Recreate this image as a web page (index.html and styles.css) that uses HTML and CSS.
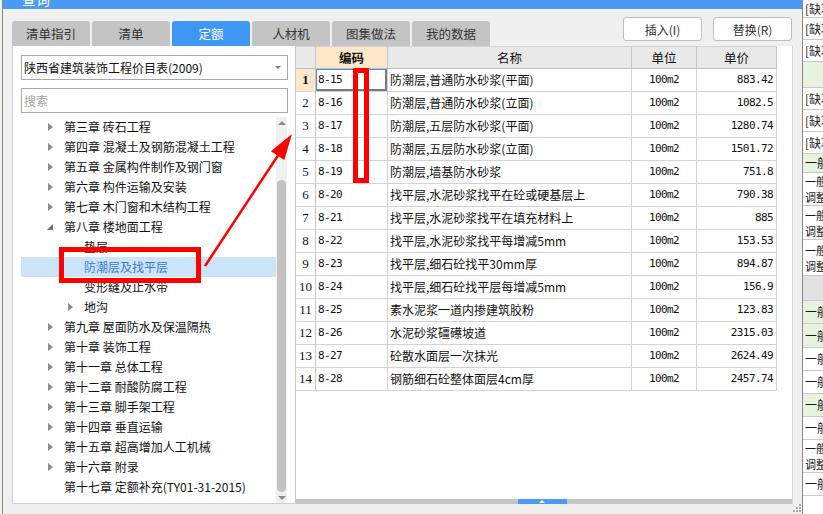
FILE: index.html
```html
<!DOCTYPE html>
<html lang="zh-CN">
<head>
<meta charset="utf-8">
<title>定额查询</title>
<link rel="stylesheet" href="styles.css">
</head>
<body>
<div class="screen">
  <div class="bg-left"></div>
  <div class="dialog">
    <div class="titlebar"><span class="title">查询</span></div>
    <div class="topbar">
      <div class="tabs">
        <div class="tab">清单指引</div>
        <div class="tab">清单</div>
        <div class="tab active">定额</div>
        <div class="tab">人材机</div>
        <div class="tab">图集做法</div>
        <div class="tab">我的数据</div>
      </div>
      <div class="buttons">
        <button class="btn">插入(I)</button>
        <button class="btn">替换(R)</button>
      </div>
    </div>
    <div class="content">
      <div class="left-pane">
        <div class="select">陕西省建筑装饰工程价目表(2009)<span class="caret"></span></div>
        <div class="search">搜索</div>
        <div class="tree">
          <div class="tree-list">
            <div class="node"><span class="tw"><i class="closed"></i></span>第三章 砖石工程</div>
            <div class="node"><span class="tw"><i class="closed"></i></span>第四章 混凝土及钢筋混凝土工程</div>
            <div class="node"><span class="tw"><i class="closed"></i></span>第五章 金属构件制作及钢门窗</div>
            <div class="node"><span class="tw"><i class="closed"></i></span>第六章 构件运输及安装</div>
            <div class="node"><span class="tw"><i class="closed"></i></span>第七章 木门窗和木结构工程</div>
            <div class="node"><span class="tw"><i class="open"></i></span>第八章 楼地面工程</div>
            <div class="node sub"><span class="tw"></span>垫层</div>
            <div class="node sub selected"><span class="tw"></span>防潮层及找平层</div>
            <div class="node sub"><span class="tw"></span>变形缝及止水带</div>
            <div class="node sub"><span class="tw"><i class="closed"></i></span>地沟</div>
            <div class="node"><span class="tw"><i class="closed"></i></span>第九章 屋面防水及保温隔热</div>
            <div class="node"><span class="tw"><i class="closed"></i></span>第十章 装饰工程</div>
            <div class="node"><span class="tw"><i class="closed"></i></span>第十一章 总体工程</div>
            <div class="node"><span class="tw"><i class="closed"></i></span>第十二章 耐酸防腐工程</div>
            <div class="node"><span class="tw"><i class="closed"></i></span>第十三章 脚手架工程</div>
            <div class="node"><span class="tw"><i class="closed"></i></span>第十四章 垂直运输</div>
            <div class="node"><span class="tw"><i class="closed"></i></span>第十五章 超高增加人工机械</div>
            <div class="node"><span class="tw"><i class="closed"></i></span>第十六章 附录</div>
            <div class="node"><span class="tw"></span>第十七章 定额补充(TY01-31-2015)</div>
          </div>
          <div class="vscroll"><span class="up"></span><span class="thumb"></span><span class="down"></span></div>
        </div>
      </div>
      <div class="table-pane">
        <div class="grid">
          <div class="c hd rn"></div><div class="c hd code-h">编码</div><div class="c hd">名称</div><div class="c hd">单位</div><div class="c hd">单价</div>

          <div class="c rn cur">1</div><div class="c code focus">8-15</div><div class="c name">防潮层,普通防水砂浆(平面)</div><div class="c unit">100m2</div><div class="c price">883.42</div>
          <div class="c rn">2</div><div class="c code">8-16</div><div class="c name">防潮层,普通防水砂浆(立面)</div><div class="c unit">100m2</div><div class="c price">1082.5</div>
          <div class="c rn">3</div><div class="c code">8-17</div><div class="c name">防潮层,五层防水砂浆(平面)</div><div class="c unit">100m2</div><div class="c price">1280.74</div>
          <div class="c rn">4</div><div class="c code">8-18</div><div class="c name">防潮层,五层防水砂浆(立面)</div><div class="c unit">100m2</div><div class="c price">1501.72</div>
          <div class="c rn">5</div><div class="c code">8-19</div><div class="c name">防潮层,墙基防水砂浆</div><div class="c unit">100m2</div><div class="c price">751.8</div>
          <div class="c rn">6</div><div class="c code">8-20</div><div class="c name">找平层,水泥砂浆找平在砼或硬基层上</div><div class="c unit">100m2</div><div class="c price">790.38</div>
          <div class="c rn">7</div><div class="c code">8-21</div><div class="c name">找平层,水泥砂浆找平在填充材料上</div><div class="c unit">100m2</div><div class="c price">885</div>
          <div class="c rn">8</div><div class="c code">8-22</div><div class="c name">找平层,水泥砂浆找平每增减5mm</div><div class="c unit">100m2</div><div class="c price">153.53</div>
          <div class="c rn">9</div><div class="c code">8-23</div><div class="c name">找平层,细石砼找平30mm厚</div><div class="c unit">100m2</div><div class="c price">894.87</div>
          <div class="c rn">10</div><div class="c code">8-24</div><div class="c name">找平层,细石砼找平层每增减5mm</div><div class="c unit">100m2</div><div class="c price">156.9</div>
          <div class="c rn">11</div><div class="c code">8-25</div><div class="c name">素水泥浆一道内掺建筑胶粉</div><div class="c unit">100m2</div><div class="c price">123.83</div>
          <div class="c rn">12</div><div class="c code">8-26</div><div class="c name">水泥砂浆礓礤坡道</div><div class="c unit">100m2</div><div class="c price">2315.03</div>
          <div class="c rn">13</div><div class="c code">8-27</div><div class="c name">砼散水面层一次抹光</div><div class="c unit">100m2</div><div class="c price">2624.49</div>
          <div class="c rn">14</div><div class="c code">8-28</div><div class="c name">钢筋细石砼整体面层4cm厚</div><div class="c unit">100m2</div><div class="c price">2457.74</div>
        </div>
        <div class="hscroll"><span class="hthumb"></span></div>
      </div>
    </div>
    <div class="footer">
      <svg class="grip" width="8" height="8" viewBox="0 0 8 8"><g fill="#a8a8a8"><rect x="6" y="0" width="2" height="2"/><rect x="3" y="3" width="2" height="2"/><rect x="6" y="3" width="2" height="2"/><rect x="0" y="6" width="2" height="2"/><rect x="3" y="6" width="2" height="2"/><rect x="6" y="6" width="2" height="2"/></g></svg>
    </div>
  </div>
  <div class="bg-right">
    <div class="r" style="height:18px">[缺项]</div>
    <div class="r" style="height:22px">[缺项]</div>
    <div class="r" style="height:22px">[缺项]</div>
    <div class="r green" style="height:26px"></div>
    <div class="r" style="height:22px">[缺项]</div>
    <div class="r" style="height:22px">[缺项]</div>
    <div class="r" style="height:22px">[缺项]</div>
    <div class="r green" style="height:19px">一般项目</div>
    <div class="r two" style="height:33px"><span>一般项目</span><span>调整系数</span></div>
    <div class="r two" style="height:34px"><span>一般项目</span><span>调整系数</span></div>
    <div class="r two" style="height:36px"><span>一般项目</span><span>调整系数</span></div>
    <div class="r grey" style="height:25px"></div>
    <div class="r green" style="height:23px">一般项目</div>
    <div class="r green" style="height:24px">一般项目</div>
    <div class="r" style="height:23px">一般项目</div>
    <div class="r" style="height:23px">一般项目</div>
    <div class="r green" style="height:23px">一般项目</div>
    <div class="r" style="height:23px">一般项目</div>
    <div class="r two" style="height:33px"><span>一般项目</span><span>调整系数</span></div>
    <div class="r" style="height:23px">一般项目</div>
    <div class="r" style="height:19px"></div>
  </div>
  <svg class="annot" width="823" height="514" viewBox="0 0 823 514">
    <rect x="61.5" y="249.5" width="137" height="31" fill="none" stroke="#fe0000" stroke-width="5"/>
    <rect x="355.5" y="70.5" width="11" height="110" fill="none" stroke="#fe0000" stroke-width="5"/>
    <line x1="205" y1="266" x2="279" y2="154" stroke="#fe0000" stroke-width="2.5"/>
    <polygon points="292,134 284.3,160.1 270.9,151.3" fill="#fe0000"/>
  </svg>
</div>
</body>
</html>
```

FILE: styles.css
```css
* { box-sizing: border-box; margin: 0; padding: 0; }
html, body { width: 823px; height: 514px; overflow: hidden; }
body {
  font-family: "Noto Sans CJK SC", "Noto Sans", sans-serif;
  font-size: 12px;
  color: #1a1a1a;
  background: #f0f0f0;
}
.screen { display: flex; width: 823px; height: 514px; position: relative; }

.bg-left { width: 2px; background: #eef3ea; }

.dialog {
  width: 801px;
  border-left: 1px solid #8a8a8a;
  border-right: 1px solid #8a8a8a;
  background: #f0f0f0;
  display: flex;
  flex-direction: column;
}
.titlebar { height: 9px; background: #4b9bf5; overflow: hidden; padding-left: 19px; }
.title { display: block; color: #fff; font-size: 14px; line-height: 14px; margin-top: -8px; }

.topbar { height: 37px; display: flex; padding: 0 10px 0 9px; }
.tabs { display: flex; gap: 2px; align-self: flex-end; }
.tab {
  width: 78px; height: 25px;
  background: #c4c4c4;
  border-radius: 3px 3px 0 0;
  text-align: center;
  line-height: 25px;
  font-size: 12.5px;
  color: #333;
}
.tab.active { background: #3f97f5; color: #fff; }
.buttons { margin-left: auto; display: flex; gap: 11px; padding-top: 8px; }
.btn {
  width: 79px; height: 24px;
  background: #fff;
  border: 1px solid #bdbdbd;
  border-radius: 3px;
  font-family: inherit;
  font-size: 12px;
  color: #333;
}

.content { height: 458px; display: flex; padding-left: 9px; }

.left-pane {
  width: 283px;
  background: #fff;
  border-left: 1px solid #d0d0d0;
  border-bottom: 1px solid #d0d0d0;
  padding: 9px 6px 0 8px;
  display: flex;
  flex-direction: column;
}
.select, .search {
  width: 267px; height: 25px;
  border: 1px solid #a9a9a9;
  line-height: 23px;
  padding-left: 2px;
  font-size: 12px;
}
.select { position: relative; color: #111; }
.caret {
  position: absolute; right: 6px; top: 10px;
  border-top: 3px solid #777;
  border-left: 3px solid transparent;
  border-right: 3px solid transparent;
}
.search { margin-top: 8px; color: #a6a6a6; }

.tree { margin-top: 4px; flex: 1; display: flex; width: 266px; }
.tree-list { width: 255px; }
.node {
  height: 20px;
  line-height: 20px;
  padding-left: 27px;
  display: flex;
  align-items: center;
  color: #111;
  font-size: 12px;
  white-space: nowrap;
}
.node.sub { padding-left: 47px; }
.node.selected { background: #cce4f7; color: #3b7bd4; }
.tw { width: 16px; height: 20px; display: flex; align-items: center; flex: none; }
.closed {
  display: block;
  border-left: 5px solid #8c8c8c;
  border-top: 4px solid transparent;
  border-bottom: 4px solid transparent;
}
.open {
  display: block;
  margin-left: -1px;
  border-bottom: 6px solid #6b6b6b;
  border-left: 6px solid transparent;
}

.vscroll {
  width: 11px;
  background: #f0f0f0;
  display: flex;
  flex-direction: column;
  align-items: center;
}
.up {
  margin-top: 4px;
  border-bottom: 4px solid #8a8a8a;
  border-left: 4px solid transparent;
  border-right: 4px solid transparent;
}
.thumb { margin-top: 55px; width: 9px; height: 312px; background: #c2c2c2; border-radius: 5px; }
.down {
  margin-top: 4px;
  border-top: 4px solid #8a8a8a;
  border-left: 4px solid transparent;
  border-right: 4px solid transparent;
}

.table-pane {
  width: 498px;
  background: #fff;
  border-left: 1px solid #c8c8c8;
  border-right: 1px solid #d6d6d6;
  display: flex;
  flex-direction: column;
}
.grid {
  display: grid;
  grid-template-columns: 20px 72px 244px 65px 80px;
  grid-auto-rows: 23px;
  width: 481px;
}
.c {
  border-right: 1px solid #d3d3d3;
  border-bottom: 1px solid #d3d3d3;
  line-height: 22px;
  white-space: nowrap;
  overflow: hidden;
  font-size: 12px;
  color: #111;
}
.hd {
  background: #e9e9e9;
  border-top: 1px solid #d3d3d3;
  border-right-color: #c6c6c6;
  border-bottom-color: #bdbdbd;
  text-align: center;
  line-height: 21px;
  font-size: 12.5px;
}
.code-h { background: #fde7c9; font-weight: bold; }
.rn {
  text-align: center;
  font-family: "Liberation Serif", serif;
  font-size: 13px;
  border-right-color: #c6c6c6;
}
.rn.cur { background: #fde7c9; font-weight: bold; }
.code, .price, .unit {
  font-family: "DejaVu Sans Mono", monospace;
  font-size: 11px;
  letter-spacing: -0.6px;
}
.code { padding-left: 2px; }
.focus { box-shadow: inset 1px 1px 0 #4a90e2, inset -2px -2px 0 #7a7a7a; }
.name { padding-left: 2px; }
.unit { text-align: center; }
.price { text-align: right; padding-right: 3px; }

.hscroll {
  margin-top: auto;
  height: 5px;
  background: #c6c6c6;
  position: relative;
}
.hthumb {
  position: absolute;
  left: 222px; top: 0;
  width: 49px; height: 5px;
  background: #4b9bf5;
}
.hthumb::after {
  content: "";
  position: absolute;
  left: 21px; top: 1px;
  border-bottom: 3px solid #fff;
  border-left: 3px solid transparent;
  border-right: 3px solid transparent;
}

.footer { height: 10px; display: flex; justify-content: flex-end; align-items: flex-end; padding: 0 1px 2px 0; }

.bg-right { width: 20px; background: #fff; overflow: hidden; }
.r {
  border-bottom: 1px solid #c8c8c8;
  padding-left: 2px;
  white-space: nowrap;
  overflow: hidden;
  font-size: 12px;
  line-height: 20px;
  color: #1a1a1a;
  display: flex;
  flex-direction: column;
  justify-content: center;
}
.r.two span { display: block; height: 16px; line-height: 16px; font-size: 11px; overflow: hidden; }
.r.green { background: #e7f3df; }
.r.grey { background: #e2e2e2; }

.annot { position: absolute; left: 0; top: 0; pointer-events: none; }
```
